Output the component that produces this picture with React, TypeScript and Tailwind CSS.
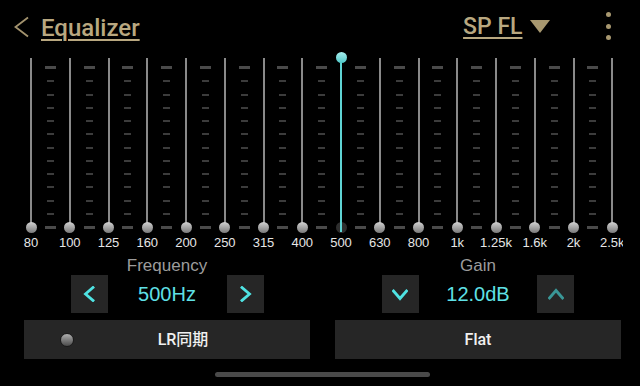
import React from 'react';

const bands = ['80', '100', '125', '160', '200', '250', '315', '400', '500', '630', '800', '1k', '1.25k', '1.6k', '2k', '2.5k'];
const gains = bands.map((_, i) => (i === 8 ? 12 : -12));
const ACTIVE = 8;

// knob centre travels from 5.7px (+12dB) to 175px (-12dB) inside a column
const knobTop = (g: number) => 5.7 + ((12 - g) / 24) * 169.3 - 5.5;

const Slider = ({ gain, active }: { gain: number; active: boolean }) => (
    <div className="relative w-[20px] h-[181px] shrink-0 flex justify-center">
        {active ? (
            <>
                <div className="absolute left-[4.5px] top-[169.5px] w-[11px] h-[11px] rounded-full bg-[#2e2e2e]" />
                <div className="mt-[5.7px] w-[2px] h-[174px] bg-[#5fd4d4] relative" />
                <div
                    className="absolute left-[4.5px] w-[11px] h-[11px] rounded-full bg-linear-to-b from-[#a6eeee] to-[#4cc8c8]"
                    style={{ top: knobTop(gain) }}
                />
            </>
        ) : (
            <>
                <div className="mt-[6px] w-[2px] h-[169px] bg-[#8a8a8a]" />
                <div
                    className="absolute left-[4.5px] w-[11px] h-[11px] rounded-full bg-linear-to-b from-[#d2d2d2] to-[#7a7a7a]"
                    style={{ top: knobTop(gain) }}
                />
            </>
        )}
    </div>
);

const Ticks = () => (
    <div className="w-[18.75px] h-[181px] shrink-0 flex justify-center">
        <div className="mt-[14.2px] h-[163px] flex flex-col justify-between items-center">
            {Array.from({ length: 13 }).map((_, i) =>
                i === 0 || i === 12 ? (
                    <div key={i} className="w-[11px] h-[3px] bg-[#4a4a4a]" />
                ) : (
                    <div key={i} className="w-[7px] h-[2px] bg-[#3c3c3c]" />
                )
            )}
        </div>
    </div>
);

const Chevron = ({ dir, dim }: { dir: 'left' | 'right' | 'up' | 'down'; dim?: boolean }) => {
    const d = {
        left: 'M10 1.5 L2.5 8 L10 14.5',
        right: 'M3 1.5 L10.5 8 L3 14.5',
        up: 'M1.5 11 L8 3.5 L14.5 11',
        down: 'M1.5 4 L8 11.5 L14.5 4',
    }[dir];
    const horiz = dir === 'left' || dir === 'right';
    return (
        <svg width={horiz ? 13 : 16} height={horiz ? 16 : 15} viewBox={horiz ? '0 0 13 16' : '0 0 16 15'} fill="none">
            <path d={d} stroke={dim ? '#3a9797' : '#4fe3e3'} strokeWidth="2.8" strokeLinecap="square" />
        </svg>
    );
};

const StepBtn = ({ children }: { children: React.ReactNode }) => (
    <div className="w-[37px] h-[38px] bg-[#262626] flex items-center justify-center">{children}</div>
);

export default function App() {
    return (
        <div
            className="w-[640px] h-[386px] bg-black overflow-hidden flex flex-col"
            style={{ fontFamily: '"Liberation Sans", "Noto Sans CJK SC", sans-serif' }}
        >
            {/* Header */}
            <div className="h-[52px] flex items-center pl-[13px] pr-[29.5px] shrink-0 font-[Roboto] font-medium">
                <svg width="17" height="22" viewBox="0 0 17 22" fill="none" className="mt-[1px]">
                    <path d="M15 1.5 L2.5 11 L15 20.5" stroke="#a3936e" strokeWidth="1.8" />
                </svg>
                <span className="ml-[11px] text-[24px] text-[#b9a880] underline underline-offset-[3px] decoration-[2px] mt-[3px]">
                    Equalizer
                </span>
                <div className="ml-auto flex items-center">
                    <span className="text-[23px] text-[#b9a880] underline underline-offset-[3px] decoration-[2px] mt-[3px]">SP FL</span>
                    <svg width="20" height="13" viewBox="0 0 20 13" className="ml-[7px]">
                        <polygon points="0,0 20,0 10,13" fill="#a89870" />
                    </svg>
                    <div className="ml-[56px] flex flex-col gap-[6.5px] items-center">
                        <div className="w-[5px] h-[5px] rounded-full bg-[#a89870]" />
                        <div className="w-[5px] h-[5px] rounded-full bg-[#a89870]" />
                        <div className="w-[5px] h-[5px] rounded-full bg-[#a89870]" />
                    </div>
                </div>
            </div>

            {/* Equalizer bands */}
            <div className="w-[623px] overflow-hidden shrink-0">
                <div className="flex pl-[21px]">
                    {bands.map((b, i) => (
                        <React.Fragment key={b}>
                            <Slider gain={gains[i]} active={i === ACTIVE} />
                            {i < bands.length - 1 && <Ticks />}
                        </React.Fragment>
                    ))}
                </div>
                <div className="flex pl-[21px] h-[18px] items-center">
                    {bands.map((b, i) => (
                        <React.Fragment key={b}>
                            <div className="w-[20px] shrink-0 flex justify-center">
                                <span className="text-[13px] leading-none text-[#e6e6e6] whitespace-nowrap">{b}</span>
                            </div>
                            {i < bands.length - 1 && <div className="w-[18.75px] shrink-0" />}
                        </React.Fragment>
                    ))}
                </div>
            </div>

            {/* Controls */}
            <div className="ml-[24px] w-[597px] grid grid-cols-2 gap-x-[25px] mt-[5px]">
                <div className="flex flex-col items-center">
                    <div className="h-[19px] leading-[19px] text-[17px] text-[#9c9c9c]">Frequency</div>
                    <div className="w-[193px] flex items-center justify-between">
                        <StepBtn><Chevron dir="left" /></StepBtn>
                        <span className="text-[20px] text-[#5fe0e6]">500Hz</span>
                        <StepBtn><Chevron dir="right" /></StepBtn>
                    </div>
                </div>
                <div className="flex flex-col items-center">
                    <div className="h-[19px] leading-[19px] text-[17px] text-[#9c9c9c]">Gain</div>
                    <div className="w-[193px] flex items-center justify-between">
                        <StepBtn><Chevron dir="down" /></StepBtn>
                        <span className="text-[20px] text-[#5fe0e6]">12.0dB</span>
                        <StepBtn><Chevron dir="up" dim /></StepBtn>
                    </div>
                </div>

                <div className="mt-[7px] h-[39px] bg-[#262626] flex items-center pl-[36px] pr-[18px]">
                    <div className="w-[14px] h-[14px] rounded-full bg-linear-to-b from-[#b0b0b0] to-[#4c4c4c] border border-[#1a1a1a]" />
                    <span className="flex-1 text-center text-[16px] text-[#f0f0f0] font-[Roboto,'Noto_Sans_CJK_SC',sans-serif] font-medium">LR同期</span>
                </div>
                <div className="mt-[7px] h-[39px] bg-[#262626] flex items-center justify-center">
                    <span className="text-[16px] text-[#f0f0f0] font-[Roboto] font-medium">Flat</span>
                </div>
            </div>

            {/* Home indicator */}
            <div className="mt-[13px] ml-[215px] w-[215px] h-[5px] rounded-full bg-[#4a4a4a]" />
        </div>
    );
}
